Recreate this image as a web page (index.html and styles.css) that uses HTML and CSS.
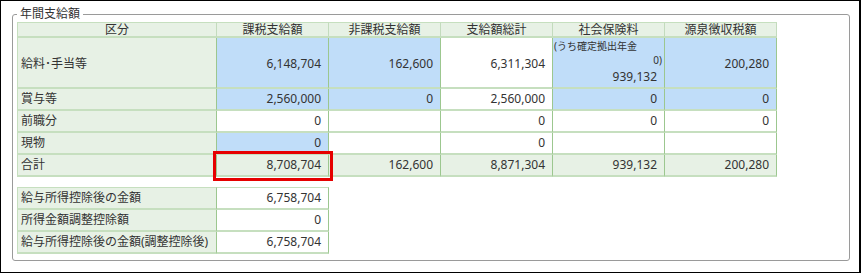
FILE: index.html
```html
<!DOCTYPE html>
<html lang="ja">
<head>
<meta charset="utf-8">
<title>年間支給額</title>
<link rel="stylesheet" href="styles.css">
</head>
<body>
<div class="frame">
  <fieldset class="box">
    <legend class="box-title">年間支給額</legend>
    <table class="grid main">
      <colgroup>
        <col class="c-label"><col class="c-num"><col class="c-num"><col class="c-num"><col class="c-num"><col class="c-num">
      </colgroup>
      <thead>
        <tr>
          <th class="first">区分</th>
          <th>課税支給額</th>
          <th>非課税支給額</th>
          <th>支給額総計</th>
          <th>社会保険料</th>
          <th>源泉徴収税額</th>
        </tr>
      </thead>
      <tbody>
        <tr class="tall">
          <td class="label first">給料･手当等</td>
          <td class="num blue">6,148,704</td>
          <td class="num blue">162,600</td>
          <td class="num">6,311,304</td>
          <td class="blue pension">
            <div class="note-l">(うち確定拠出年金</div>
            <div class="note-r">0)</div>
            <div class="pension-num">939,132</div>
          </td>
          <td class="num blue">200,280</td>
        </tr>
        <tr>
          <td class="label first">賞与等</td>
          <td class="num blue">2,560,000</td>
          <td class="num blue">0</td>
          <td class="num">2,560,000</td>
          <td class="num blue">0</td>
          <td class="num blue">0</td>
        </tr>
        <tr>
          <td class="label first">前職分</td>
          <td class="num">0</td>
          <td class="num"></td>
          <td class="num">0</td>
          <td class="num">0</td>
          <td class="num">0</td>
        </tr>
        <tr>
          <td class="label first">現物</td>
          <td class="num blue">0</td>
          <td class="num"></td>
          <td class="num">0</td>
          <td class="num"></td>
          <td class="num"></td>
        </tr>
        <tr class="total">
          <td class="label first">合計</td>
          <td class="num hl">8,708,704</td>
          <td class="num">162,600</td>
          <td class="num">8,871,304</td>
          <td class="num">939,132</td>
          <td class="num">200,280</td>
        </tr>
      </tbody>
    </table>
    <table class="grid sub">
      <colgroup>
        <col class="c-label"><col class="c-num">
      </colgroup>
      <tbody>
        <tr class="toprow">
          <td class="label first">給与所得控除後の金額</td>
          <td class="num">6,758,704</td>
        </tr>
        <tr>
          <td class="label first">所得金額調整控除額</td>
          <td class="num">0</td>
        </tr>
        <tr>
          <td class="label first">給与所得控除後の金額(調整控除後)</td>
          <td class="num">6,758,704</td>
        </tr>
      </tbody>
    </table>
  </fieldset>
</div>
</body>
</html>
```
FILE: styles.css
```css
html, body {
  margin: 0;
  padding: 0;
  background: #fff;
}
body {
  font-family: "Noto Sans", "Noto Sans CJK JP", sans-serif;
  font-size: 12px;
  color: #333;
}
.frame {
  width: 861px;
  height: 273px;
  box-sizing: border-box;
  border: 1px solid #000;
  border-right-width: 2px;
  padding: 5px 0 0 11px;
}
.box {
  box-sizing: border-box;
  width: 838px;
  height: 255px;
  margin: 0;
  padding: 0 4px 6px 4px;
  border: 1px solid #9a9a9a;
  border-radius: 3px;
  min-inline-size: 0;
}
.box-title {
  padding: 0 3px;
  font-size: 12px;
  line-height: 16px;
  color: #333;
}
.grid {
  border-collapse: separate;
  border-spacing: 0;
  table-layout: fixed;
}
.main {
  width: 760px;
}
.sub {
  width: 312px;
  margin-top: 10px;
}
.c-label { width: 200px; }
.c-num { width: 112px; }

.grid th,
.grid td {
  padding: 0;
  border-right: 1px solid #9cc78f;
  border-bottom: 2px solid #c6dfbf;
  font-weight: normal;
  white-space: nowrap;
  overflow: hidden;
}
.grid th {
  background: #e7f1e5;
  border-top: 1px solid #c6dfbf;
  border-right-color: #c3dbbd;
  line-height: 13px;
  text-align: center;
}
.grid .first {
  border-left: 1px solid #c6dfbf;
}
.grid td {
  line-height: 20px;
  height: 20px;
  background: #fff;
}
.grid td.label {
  background: #e7f1e5;
  padding-left: 3px;
  border-right-color: #9cc78f;
}
.grid td.num {
  text-align: right;
  padding-right: 7px;
}
.grid td.blue {
  background: #c0ddf9;
}
.grid tr.total td {
  background: #e7f1e5;
}
.grid tr.tall td {
  height: 49px;
  vertical-align: middle;
  padding-top: 2px;
  box-sizing: border-box;
}
.grid tr.tall td.pension {
  padding-top: 0;
  vertical-align: top;
}
.sub tr.toprow td {
  border-top: 1px solid #c6dfbf;
}
.grid td.hl {
  outline: 3px solid #e60000;
  outline-offset: 1px;
}
.note-l {
  font-size: 10px;
  line-height: 14px;
  padding: 1px 0 0 1px;
  text-align: left;
}
.note-r {
  font-size: 10px;
  line-height: 14px;
  padding-right: 2px;
  text-align: right;
}
.pension-num {
  line-height: 20px;
  text-align: right;
  padding-right: 7px;
}
```
